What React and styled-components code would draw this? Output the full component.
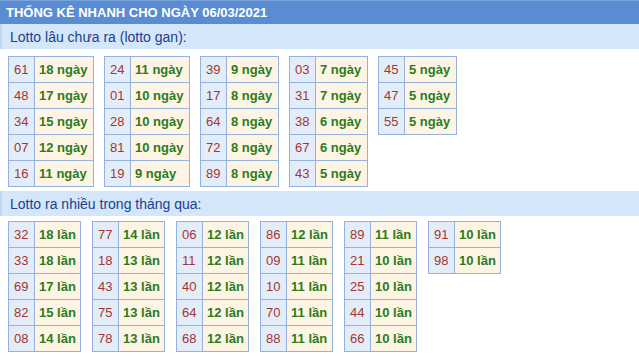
import React from 'react';
import styled, { createGlobalStyle } from 'styled-components';

const GlobalStyle = createGlobalStyle`
  body {
    margin: 0;
    background: #fff;
    font-family: "Liberation Sans", Arial, sans-serif;
  }
`;

const Page = styled.div`
  width: 639px;
  display: flex;
  flex-direction: column;
`;

const Header = styled.div`
  height: 24px;
  padding: 0 6px;
  display: flex;
  align-items: center;
  background: #5a8cd4;
  border-top: 1px solid #7aa3dc;
  box-sizing: border-box;
  color: #fff;
  font-size: 13px;
  font-weight: bold;
`;

const SectionTitle = styled.div`
  height: 25px;
  padding: 0 8px;
  display: flex;
  align-items: center;
  background: #d4e6f9;
  border-left: 2px solid #c2d7ef;
  box-sizing: border-box;
  color: #1d3f8f;
  font-size: 14px;
`;

const Tables = styled.div`
  display: flex;
  align-items: flex-start;
  gap: ${p => p.$gap}px;
  padding: ${p => p.$top}px 8px ${p => p.$bottom}px;
`;

const Block = styled.div`
  display: grid;
  grid-template-columns: 26px ${p => p.$valueWidth}px;
  border-top: 1px solid #94b2dc;
  border-left: 1px solid #94b2dc;
`;

const Cell = styled.div`
  height: 25px;
  line-height: 25px;
  padding-left: 5px;
  border-right: 1px solid #94b2dc;
  border-bottom: 1px solid #94b2dc;
  font-size: 13px;
  white-space: nowrap;
`;

const NumCell = styled(Cell)`
  background: #e3edf9;
  color: #a3362f;
`;

const ValueCell = styled(Cell)`
  padding-left: 4px;
  background: #fdf4e3;
  color: #2c7b1e;
  font-weight: bold;
`;

const gan = [
  { w: 59, rows: [['61', 18], ['48', 17], ['34', 15], ['07', 12], ['16', 11]] },
  { w: 59, rows: [['24', 11], ['01', 10], ['28', 10], ['81', 10], ['19', 9]] },
  { w: 52, rows: [['39', 9], ['17', 8], ['64', 8], ['72', 8], ['89', 8]] },
  { w: 52, rows: [['03', 7], ['31', 7], ['38', 6], ['67', 6], ['43', 5]] },
  { w: 52, rows: [['45', 5], ['47', 5], ['55', 5]] },
];

const nhieu = [
  { w: 46, rows: [['32', 18], ['33', 18], ['69', 17], ['82', 15], ['08', 14]] },
  { w: 46, rows: [['77', 14], ['18', 13], ['43', 13], ['75', 13], ['78', 13]] },
  { w: 46, rows: [['06', 12], ['11', 12], ['40', 12], ['64', 12], ['68', 12]] },
  { w: 46, rows: [['86', 12], ['09', 11], ['10', 11], ['70', 11], ['88', 11]] },
  { w: 46, rows: [['89', 11], ['21', 10], ['25', 10], ['44', 10], ['66', 10]] },
  { w: 46, rows: [['91', 10], ['98', 10]] },
];

const StatBlock = ({ data, unit }) => (
  <Block $valueWidth={data.w}>
    {data.rows.map(([num, count]) => (
      <React.Fragment key={num}>
        <NumCell>{num}</NumCell>
        <ValueCell>{count} {unit}</ValueCell>
      </React.Fragment>
    ))}
  </Block>
);

const App = () => (
  <Page>
    <GlobalStyle />
    <Header>THỐNG KÊ NHANH CHO NGÀY 06/03/2021</Header>
    <SectionTitle>Lotto lâu chưa ra (lotto gan):</SectionTitle>
    <Tables $gap={10} $top={7} $bottom={4}>
      {gan.map((d, i) => <StatBlock key={i} data={d} unit="ngày" />)}
    </Tables>
    <SectionTitle>Lotto ra nhiều trong tháng qua:</SectionTitle>
    <Tables $gap={11} $top={5} $bottom={4}>
      {nhieu.map((d, i) => <StatBlock key={i} data={d} unit="lần" />)}
    </Tables>
  </Page>
);

export default App;
